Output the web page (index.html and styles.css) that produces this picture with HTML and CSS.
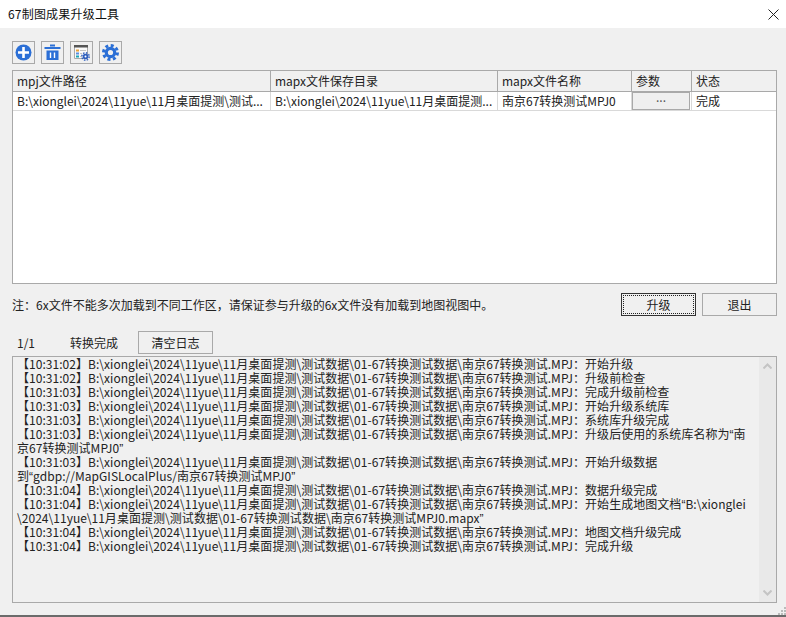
FILE: index.html
```html
<!DOCTYPE html>
<html lang="zh-CN">
<head>
<meta charset="utf-8">
<title>67制图成果升级工具</title>
<link rel="stylesheet" href="styles.css">
</head>
<body>
<div class="window">
  <header class="titlebar">
    <span class="title">67制图成果升级工具</span>
    <svg class="close" width="11" height="11" viewBox="0 0 11 11"><path d="M.5.5l10 10M10.5.5l-10 10" stroke="#222" stroke-width="1" fill="none"/></svg>
  </header>
  <main class="content">
    <div class="toolbar">
      <button class="tool"><svg width="17" height="17" viewBox="0 0 17 17"><circle cx="8.500" cy="8.500" r="8" fill="#2b6fd6"/><path d="M8.500 3v11M3 8.500h11" stroke="#fff" stroke-width="2.600"/></svg></button>
      <button class="tool"><svg width="17" height="17" viewBox="0 0 17 17"><path d="M6 .5h5v2H6z" fill="#2b6fd6"/><path d="M.5 3h16v2H.5z" fill="#2b6fd6"/><path d="M2.500 6.500h12V16h-12z" fill="#2b6fd6"/><path d="M6.500 8.500v5.500M10.500 8.500v5.500" stroke="#fff" stroke-width="1.400"/></svg></button>
      <button class="tool"><svg width="17" height="17" viewBox="0 0 17 17"><path d="M1.500 1.500h13v13h-13z" fill="#fafafa" stroke="#aaa"/><path d="M1 1h14v2.500H1z" fill="#555"/><path d="M3 5.500h3v2H3z" fill="#e9a23b"/><path d="M3 8.500h3v2H3z" fill="#5b8fe0"/><path d="M3 11.500h3v2H3z" fill="#18a6b8"/><path d="M7 6.500h6M7 9.500h2M7 12.500h2" stroke="#c4c4c4"/><circle cx="12.500" cy="12.500" r="3.700" fill="none" stroke="#2f5fbe" stroke-width="1.400" stroke-dasharray="1.500 1.400"/><circle cx="12.500" cy="12.500" r="2.800" fill="#2f5fbe"/><circle cx="12.500" cy="12.500" r="1" fill="#fff"/></svg></button>
      <button class="tool"><svg width="17" height="17" viewBox="0 0 17 17"><circle cx="8.500" cy="8.500" r="7" fill="none" stroke="#2b6fd6" stroke-width="3" stroke-dasharray="3 2.500"/><circle cx="8.500" cy="8.500" r="4.200" fill="none" stroke="#2b6fd6" stroke-width="3.200"/></svg></button>
    </div>
    <div class="table">
      <div class="row head">
        <div class="cell c1">mpj文件路径</div>
        <div class="cell c2">mapx文件保存目录</div>
        <div class="cell c3">mapx文件名称</div>
        <div class="cell c4">参数</div>
        <div class="cell c5">状态</div>
      </div>
      <div class="row body">
        <div class="cell c1">B:\xionglei\2024\11yue\11月桌面提测\测试...</div>
        <div class="cell c2">B:\xionglei\2024\11yue\11月桌面提测...</div>
        <div class="cell c3">南京67转换测试MPJ0</div>
        <div class="cell c4 param"><span class="dots">...</span></div>
        <div class="cell c5">完成</div>
      </div>
    </div>
    <div class="notebar">
      <p class="note">注：6x文件不能多次加载到不同工作区，请保证参与升级的6x文件没有加载到地图视图中。</p>
      <div class="actions">
        <button class="btn primary"><span class="focus">升级</span></button>
        <button class="btn">退出</button>
      </div>
    </div>
    <div class="statusbar">
      <span class="count">1/1</span>
      <span class="state">转换完成</span>
      <button class="btn clear">清空日志</button>
    </div>
    <div class="log">
      <div class="lines">
        <div>【10:31:02】B:\xionglei\2024\11yue\11月桌面提测\测试数据\01-67转换测试数据\南京67转换测试.MPJ：开始升级</div>
        <div>【10:31:02】B:\xionglei\2024\11yue\11月桌面提测\测试数据\01-67转换测试数据\南京67转换测试.MPJ：升级前检查</div>
        <div>【10:31:03】B:\xionglei\2024\11yue\11月桌面提测\测试数据\01-67转换测试数据\南京67转换测试.MPJ：完成升级前检查</div>
        <div>【10:31:03】B:\xionglei\2024\11yue\11月桌面提测\测试数据\01-67转换测试数据\南京67转换测试.MPJ：开始升级系统库</div>
        <div>【10:31:03】B:\xionglei\2024\11yue\11月桌面提测\测试数据\01-67转换测试数据\南京67转换测试.MPJ：系统库升级完成</div>
        <div>【10:31:03】B:\xionglei\2024\11yue\11月桌面提测\测试数据\01-67转换测试数据\南京67转换测试.MPJ：升级后使用的系统库名称为<span class="q">“</span>南</div>
        <div>京67转换测试MPJ0<span class="q">”</span></div>
        <div>【10:31:03】B:\xionglei\2024\11yue\11月桌面提测\测试数据\01-67转换测试数据\南京67转换测试.MPJ：开始升级数据</div>
        <div>到<span class="q">“</span>gdbp://MapGISLocalPlus/南京67转换测试MPJ0<span class="q">”</span></div>
        <div>【10:31:04】B:\xionglei\2024\11yue\11月桌面提测\测试数据\01-67转换测试数据\南京67转换测试.MPJ：数据升级完成</div>
        <div>【10:31:04】B:\xionglei\2024\11yue\11月桌面提测\测试数据\01-67转换测试数据\南京67转换测试.MPJ：开始生成地图文档<span class="q">“</span>B:\xionglei</div>
        <div>\2024\11yue\11月桌面提测\测试数据\01-67转换测试数据\南京67转换测试MPJ0.mapx<span class="q">”</span></div>
        <div>【10:31:04】B:\xionglei\2024\11yue\11月桌面提测\测试数据\01-67转换测试数据\南京67转换测试.MPJ：地图文档升级完成</div>
        <div>【10:31:04】B:\xionglei\2024\11yue\11月桌面提测\测试数据\01-67转换测试数据\南京67转换测试.MPJ：完成升级</div>
      </div>
      <div class="scrollbar">
        <svg width="9" height="6" viewBox="0 0 9 6"><path d="M.5 5.500l4-4 4 4" stroke="#c4c4c4" stroke-width="2" fill="none"/></svg>
        <svg width="9" height="6" viewBox="0 0 9 6"><path d="M.5.500l4 4 4-4" stroke="#c4c4c4" stroke-width="2" fill="none"/></svg>
      </div>
    </div>
    <svg class="grip" width="8" height="8" viewBox="0 0 8 8"><path fill="#bbb" d="M6 0h2v2H6zM3 3h2v2H3zM6 3h2v2H6zM0 6h2v2H0zM3 6h2v2H3zM6 6h2v2H6z"/></svg>
  </main>
</div>
</body>
</html>
```
FILE: styles.css
```css
* { box-sizing: border-box; }
html, body { margin: 0; padding: 0; }
body {
  width: 786px;
  height: 617px;
  overflow: hidden;
  font-family: "Noto Sans CJK SC", "DejaVu Sans", sans-serif;
  font-size: 12px;
  color: #222;
}
.window {
  height: 617px;
  display: flex;
  flex-direction: column;
  background: #f0f0f0;
  border-bottom: 2px solid #6b6b6b;
}
.titlebar {
  height: 28px;
  flex: none;
  background: #fff;
  display: flex;
  align-items: center;
  justify-content: space-between;
  padding: 0 7px 0 8px;
  color: #111;
}
.title { font-size: 12px; line-height: 28px; letter-spacing: .2px; }
.content {
  position: relative;
  flex: 1;
  min-height: 0;
  padding: 13px 9px 0 12px;
  display: flex;
  flex-direction: column;
}
.toolbar { display: flex; gap: 6px; height: 23px; margin-bottom: 6px; }
.tool {
  width: 23px;
  height: 23px;
  padding: 0;
  border: 1px solid #a9a9a9;
  background: #f0f0f0;
  display: flex;
  align-items: center;
  justify-content: center;
}
.table {
  height: 214px;
  flex: none;
  background: #fff;
  border: 1px solid #a9a9a9;
}
.row { display: grid; grid-template-columns: 258px 227px 134px 60px 1fr; }
.head { height: 21px; background: #f0f0f0; border-bottom: 1px solid #a9a9a9; }
.body { height: 19px; border-bottom: 1px solid #d9d9d9; }
.cell {
  padding-left: 4px;
  white-space: nowrap;
  overflow: hidden;
  line-height: 19px;
  border-right: 1px solid #a9a9a9;
}
.body .cell { line-height: 18px; border-right-color: #d9d9d9; }
.cell.c5, .body .cell.c5 { border-right: 0; }
.param.param { padding: 0 1px 0 0; }
.body .dots {
  display: block;
  height: 18px;
  background: #efefef;
  border: 1px solid #a9a9a9;
  text-align: center;
  line-height: 8px;
  color: #555;
}
.notebar {
  display: flex;
  justify-content: space-between;
  align-items: center;
  height: 23px;
  margin-top: 9px;
  flex: none;
}
.note { margin: 0; line-height: 23px; }
.actions { display: flex; gap: 6px; }
.btn {
  width: 75px;
  height: 23px;
  padding: 0;
  font: inherit;
  color: #222;
  background: #f0f0f0;
  border: 1px solid #a9a9a9;
}
.primary { border-color: #333; padding: 1px; }
.focus {
  display: block;
  height: 19px;
  line-height: 17px;
  border: 1px dotted #222;
}
.statusbar {
  display: flex;
  align-items: center;
  height: 23px;
  margin-top: 15px;
  flex: none;
}
.count { width: 58px; padding-left: 5px; }
.state { width: 68px; }
.log {
  height: 247px;
  margin-top: 2px;
  flex: none;
  border: 1px solid #a9a9a9;
  background: #f0f0f0;
  display: flex;
  justify-content: space-between;
}
.lines {
  padding: 0 0 0 4px;
  line-height: 14px;
  letter-spacing: .04px;
  white-space: nowrap;
  min-width: 0;
  overflow: hidden;
}
.q { font-family: "Liberation Sans", sans-serif; line-height: 0; }
.scrollbar {
  width: 17px;
  flex: none;
  background: #e9e9e9;
  display: flex;
  flex-direction: column;
  justify-content: space-between;
  align-items: center;
  padding: 6px 0 6px;
}
.grip { position: absolute; right: 0; bottom: 0; }
```
